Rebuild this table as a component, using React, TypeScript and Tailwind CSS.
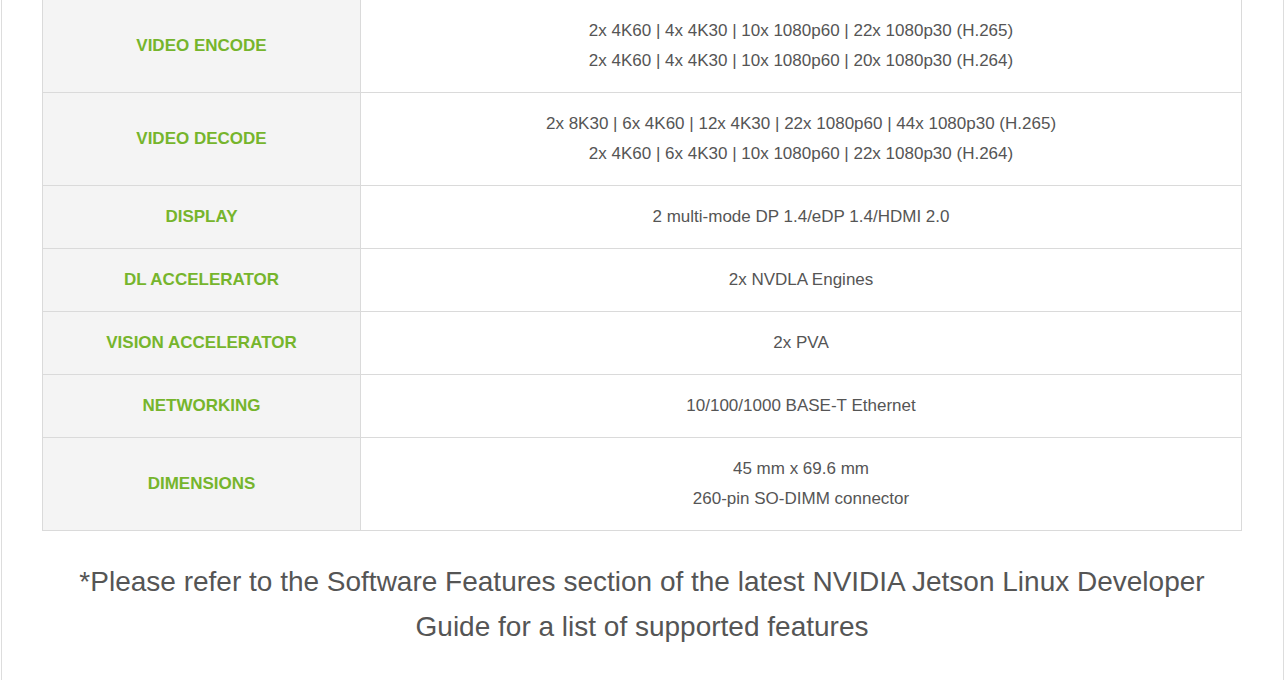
import React from "react";

type Spec = { label: string; lines: string[] };

const specs: Spec[] = [
  {
    label: "VIDEO ENCODE",
    lines: [
      "2x 4K60 | 4x 4K30 | 10x 1080p60 | 22x 1080p30 (H.265)",
      "2x 4K60 | 4x 4K30 | 10x 1080p60 | 20x 1080p30 (H.264)",
    ],
  },
  {
    label: "VIDEO DECODE",
    lines: [
      "2x 8K30 | 6x 4K60 | 12x 4K30 | 22x 1080p60 | 44x 1080p30 (H.265)",
      "2x 4K60 | 6x 4K30 | 10x 1080p60 | 22x 1080p30 (H.264)",
    ],
  },
  { label: "DISPLAY", lines: ["2 multi-mode DP 1.4/eDP 1.4/HDMI 2.0"] },
  { label: "DL ACCELERATOR", lines: ["2x NVDLA Engines"] },
  { label: "VISION ACCELERATOR", lines: ["2x PVA"] },
  { label: "NETWORKING", lines: ["10/100/1000 BASE-T Ethernet"] },
  {
    label: "DIMENSIONS",
    lines: ["45 mm x 69.6 mm", "260-pin SO-DIMM connector"],
  },
];

const SpecRow = ({ spec }: { spec: Spec }) => (
  <div className="flex border-b border-[#dadada]">
    <div className="flex w-[318px] shrink-0 items-center justify-center border-r border-[#dadada] bg-[#f4f4f4] px-4 py-4 text-center text-[17px] font-bold leading-[30px] text-[#76b52c]">
      {spec.label}
    </div>
    <div className="flex flex-1 flex-col items-center justify-center px-4 py-4 text-center text-[17px] leading-[30px] text-[#555555]">
      {spec.lines.map((line) => (
        <div key={line}>{line}</div>
      ))}
    </div>
  </div>
);

export default function App() {
  return (
    <div className="min-h-[680px] bg-white [font-family:'Liberation_Sans',Arial,sans-serif]">
      <div className="ml-px min-h-[680px] w-[1283px] border-x border-[#dddddd] px-10">
        <div className="w-[1200px] border-x border-[#dadada]">
          {specs.map((spec) => (
            <SpecRow key={spec.label} spec={spec} />
          ))}
        </div>
        <p className="mt-7 w-[1200px] text-center text-[28px] leading-[45px] text-[#555555]">
          *Please refer to the Software Features section of the latest NVIDIA
          Jetson Linux Developer Guide for a list of supported features
        </p>
      </div>
    </div>
  );
}
